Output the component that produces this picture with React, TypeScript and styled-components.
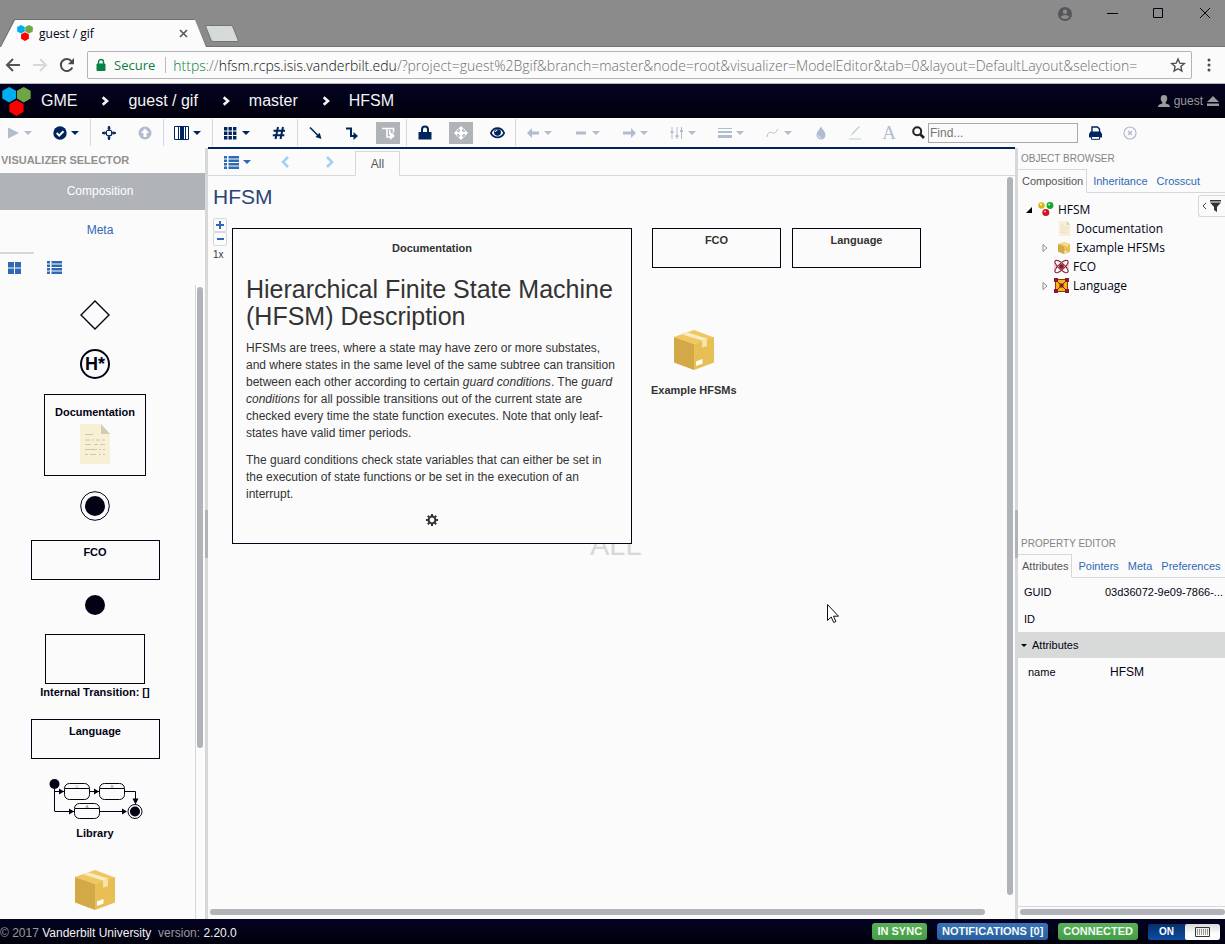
import React from "react";
import styled, { createGlobalStyle, css } from "styled-components";

const ink = "#00245c";
const faded = "#b2bccf";
const link = "#2f69b3";
const paper = "#fbfbfb";
const line = "#d6d9d9";
const thumb = "#b0b4b9";
const black = "#020214";
const sans = `"Liberation Sans", Arial, sans-serif`;
const chromeFont = `"Open Sans", "Noto Sans", sans-serif`;

const GlobalStyle = createGlobalStyle`
  *, *::before, *::after { box-sizing: border-box; }
  body { margin: 0; background: ${paper}; color: ${black}; font-family: ${sans}; font-size: 12px; }
  button { border: 0; padding: 0; background: none; color: inherit; font: inherit; cursor: pointer; }
  a { color: inherit; text-decoration: none; }
  svg { display: block; flex: none; overflow: visible; }
  h1, h2, p, ul { margin: 0; padding: 0; font-weight: normal; }
  ul { list-style: none; }
`;

const Page = styled.div`
  display: flex;
  flex-direction: column;
  height: 100vh;
  overflow: hidden;
`;

/* ---------- browser chrome ---------- */

const TabStrip = styled.div`
  display: flex;
  align-items: flex-end;
  height: 47px;
  flex: none;
  padding-right: 14px;
  background: #8b8b8b;
  border-bottom: 1px solid #727272;
`;

const Tab = styled.div`
  position: relative;
  width: 207px;
  height: 28px;
  margin-bottom: -1px;
  padding: 0 19px 0 17px;
  display: flex;
  align-items: center;
  gap: 6px;
  font-family: ${chromeFont};
  font-size: 12px;
  &::before, &::after {
    content: "";
    position: absolute;
    inset: 0;
    background: #6f6f6f;
    clip-path: polygon(0 100%, 14px 0, 194px 0, 100% 100%);
  }
  &::after {
    inset: 1px 1px 0;
    background: ${paper};
  }
  > * { position: relative; z-index: 1; }
`;

const TabTitle = styled.span`
  flex: 1;
`;

const NewTab = styled.button`
  width: 28px;
  height: 17px;
  margin: 0 auto 4px 1px;
  background: #d7dada;
  border: 1px solid #747474;
  border-radius: 2px;
  transform: skewX(22deg);
`;

const WindowButtons = styled.div`
  display: flex;
  gap: 35px;
  height: 47px;
  padding-top: 8px;
  align-items: flex-start;
`;

const AddressRow = styled.div`
  display: flex;
  align-items: center;
  height: 37px;
  flex: none;
  padding: 0 12px 0 6px;
  gap: 13px;
  border-bottom: 1px solid #b9b9bb;
`;

const AddressBox = styled.div`
  display: flex;
  align-items: center;
  flex: 1;
  min-width: 0;
  height: 28px;
  padding: 0 6px 0 8px;
  border: 1px solid #b3b3b8;
  border-radius: 2px;
  font-family: ${chromeFont};
  font-size: 14px;
  color: #6f6f6f;
  white-space: nowrap;
`;

const Secure = styled.span`
  padding: 0 10px 0 8px;
  margin-right: 7px;
  border-right: 1px solid #b9b9b9;
  line-height: 16px;
  font-size: 13px;
  color: #0b8043;
`;

const Url = styled.div`
  flex: 1;
  min-width: 0;
  outline: 0;
  overflow: hidden;
  font-weight: 300;
`;

const Scheme = styled.span` color: #0b8043; `;
const Host = styled.span` color: #111; `;

/* ---------- application header ---------- */

const NavBar = styled.nav`
  display: flex;
  align-items: center;
  height: 34px;
  flex: none;
  padding: 0 6px 0 2px;
  background: linear-gradient(#030322, #00000c);
  color: #f4f4f6;
  font-size: 16px;
`;

const Crumbs = styled.div`
  display: flex;
  align-items: center;
  flex: 1;
  padding-left: 10px;
  > svg { margin: 0 19px 0 24px; }
`;

const User = styled.button`
  display: flex;
  align-items: center;
  gap: 4px;
  font-size: 12px;
  color: #9a9a9c;
`;

const ToolBar = styled.div`
  display: flex;
  align-items: center;
  height: 30px;
  flex: none;
  padding-bottom: 1px;
`;

const ToolGroup = styled.div<{ $last?: boolean }>`
  display: flex;
  height: 27px;
  border-right: ${(p) => (p.$last ? "0" : `1px solid #d3d8e4`)};
`;

const Tool = styled.button<{ $off?: boolean; $menu?: boolean; $tight?: boolean; $narrow?: boolean }>`
  display: flex;
  align-items: center;
  justify-content: center;
  width: ${(p) => (p.$narrow ? 34 : 36)}px;
  color: ${(p) => (p.$off ? faded : ink)};
  ${(p) =>
    p.$menu &&
    css`
      width: ${p.$tight ? 45 : 48}px;
      padding-left: ${p.$tight ? 8 : 10}px;
      justify-content: flex-start;
      gap: 4px;
    `}
`;

const Pressed = styled.span`
  display: flex;
  align-items: center;
  justify-content: center;
  width: 24px;
  height: 22px;
  background: ${thumb};
  color: #fff;
`;

const Letter = styled.span`
  font-family: "Liberation Serif", serif;
  font-size: 19px;
`;

const SearchLabel = styled.label`
  display: flex;
  align-items: center;
  gap: 3px;
  padding-left: 6px;
`;

const SearchInput = styled.input`
  width: 150px;
  height: 20px;
  padding: 0 1px;
  border: 1px solid #a9a9b0;
  background: ${paper};
  font: 12px ${sans};
  color: ${black};
  &::placeholder { color: #757575; opacity: 1; }
`;

/* ---------- main area ---------- */

const Main = styled.main`
  display: grid;
  grid-template-columns: 205px 3px minmax(0, 1fr) 3px 207px;
  flex: 1;
  min-height: 0;
`;

const Splitter = styled.div`
  display: flex;
  align-items: center;
  background: ${line};
  &::before {
    content: "";
    width: 3px;
    height: 48px;
    background: ${thumb};
  }
`;

const Column = styled.div`
  display: flex;
  flex-direction: column;
  min-width: 0;
  min-height: 0;
`;

const BrowserColumn = styled(Column)`
  padding-top: 1px;
`;

const SelectorTitle = styled.h2`
  height: 25px;
  padding-left: 1px;
  line-height: 25px;
  font-size: 11px;
  font-weight: bold;
  color: #919191;
`;

const Visualizer = styled.button<{ $active?: boolean }>`
  height: ${(p) => (p.$active ? 37 : 42)}px;
  padding: 0 5px 2px 0;
  background: ${(p) => (p.$active ? thumb : "transparent")};
  color: ${(p) => (p.$active ? "#fff" : link)};
`;

const PaletteModes = styled.div`
  display: flex;
  align-items: center;
  height: 33px;
  color: ${link};
`;

const Mode = styled.button<{ $active?: boolean }>`
  display: flex;
  align-items: center;
  justify-content: center;
  height: 33px;
  width: ${(p) => (p.$active ? 34 : 40)}px;
  padding: 0 ${(p) => (p.$active ? 6 : 0)}px 4px 0;
  border-top: 2px solid ${(p) => (p.$active ? line : "transparent")};
`;

const PaletteBody = styled.div`
  display: flex;
  flex: 1;
  min-height: 0;
  overflow: hidden;
`;

const PaletteItems = styled.ul`
  display: flex;
  flex-direction: column;
  align-items: center;
  flex: 1;
  padding: 15px 5px 0 0;
  gap: 19px;
  font-size: 11px;
  font-weight: bold;
`;

const PaletteItem = styled.li<{ $pull?: number }>`
  display: flex;
  flex-direction: column;
  align-items: center;
  flex: none;
  gap: 1px;
  margin-bottom: ${(p) => -(p.$pull ?? 0)}px;
  line-height: 15px;
`;

const ShapeBox = styled.div<{ $w: number; $h: number; $pad: number }>`
  display: flex;
  flex-direction: column;
  align-items: center;
  width: ${(p) => p.$w}px;
  height: ${(p) => p.$h}px;
  padding-top: ${(p) => p.$pad}px;
  border: 1px solid ${black};
  line-height: 15px;
`;

const Spacer = styled.span`
  height: 4px;
`;

const Track = styled.div<{ $size: number }>`
  width: 10px;
  padding: 2px 0 0 1px;
  border-left: 1px solid ${line};
  &::before {
    content: "";
    display: block;
    width: 6px;
    height: ${(p) => p.$size}%;
    border-radius: 3px;
    background: ${thumb};
  }
`;

const EditorColumn = styled(Column)`
  border-top: 2px solid ${ink};
  margin-top: -1px;
`;

const EditorTabs = styled.div`
  display: flex;
  align-items: stretch;
  height: 27px;
  flex: none;
  border-bottom: 1px solid ${line};
  color: ${link};
`;

const EditorMenu = styled.button`
  display: flex;
  align-items: center;
  gap: 4px;
  width: 54px;
  padding-left: 16px;
`;

const Step = styled.button`
  display: flex;
  align-items: center;
  justify-content: center;
  width: 45px;
  color: #a5d0f3;
`;

const EditorTab = styled.button`
  width: 45px;
  height: 25px;
  margin: 2px 0 -1px 3px;
  border: 1px solid ${line};
  border-bottom-color: ${paper};
  background: ${paper};
  color: #555;
`;

const EditorTitle = styled.h1`
  height: 42px;
  flex: none;
  padding-left: 5px;
  line-height: 42px;
  font-size: 21px;
  color: #2b4575;
`;

const EditorSurface = styled.div`
  display: grid;
  grid-template-columns: minmax(0, 1fr) 8px;
  flex: 1;
  min-height: 0;
`;

const Canvas = styled.div`
  position: relative;
  flex: 1;
  color: #333;
  font-size: 11px;
`;

const VerticalThumb = styled.div`
  width: 6px;
  height: 98%;
  margin-top: 1px;
  border-radius: 3px;
  background: ${thumb};
`;

const HorizontalThumb = styled.div<{ $size: number }>`
  width: ${(p) => p.$size}%;
  height: 6px;
  flex: none;
  margin: 0 0 4px 2px;
  border-radius: 3px;
  background: ${thumb};
`;

const ZoomControl = styled.div`
  position: absolute;
  left: 5px;
  top: 0;
  width: 14px;
  color: ${link};
`;

const ZoomButton = styled.button`
  display: flex;
  align-items: center;
  justify-content: center;
  width: 14px;
  height: 14px;
  border: 1px solid ${line};
  border-radius: 2px;
`;

const ZoomLevel = styled.span`
  display: block;
  padding-top: 3px;
  line-height: 12px;
  font-size: 10px;
  color: #333;
`;

const Watermark = styled.span`
  position: absolute;
  left: 382px;
  top: 311px;
  font-size: 29px;
  line-height: 32px;
  color: #d6d9d9;
`;

const Node = styled.div<{ $x: number; $y: number }>`
  position: absolute;
  left: ${(p) => p.$x}px;
  top: ${(p) => p.$y}px;
  display: flex;
  flex-direction: column;
  align-items: center;
  font-weight: bold;
`;

const NodeName = styled.span`
  padding-top: 13px;
  line-height: 15px;
`;

const DocNode = styled.article`
  position: absolute;
  left: 24px;
  top: 10px;
  width: 400px;
  height: 316px;
  padding: 12px 13px;
  border: 1px solid ${black};
  background: ${paper};
  font-size: 12px;
  line-height: 17px;
  > h2 { font-size: 25px; line-height: 27px; margin: 20px 0 10px; }
  > p { margin-bottom: 10px; }
`;

const DocName = styled.div`
  font-size: 11px;
  line-height: 15px;
  font-weight: bold;
  text-align: center;
`;

const DocSettings = styled.button`
  display: block;
  margin: 11px auto 0;
`;

const Pointer = styled.svg`
  position: absolute;
  left: 619px;
  top: 386px;
`;

/* ---------- right column ---------- */

const Panel = styled.section`
  display: flex;
  flex-direction: column;
  flex: 1;
  min-height: 0;
`;

const PanelTitle = styled.h2`
  height: 20px;
  padding-left: 3px;
  line-height: 20px;
  font-size: 10px;
  color: #848484;
`;

const PanelTabs = styled.div`
  display: flex;
  height: 24px;
  font-size: 11px;
  border-bottom: 1px solid ${line};
  color: ${link};
`;

const PanelTab = styled.button<{ $active?: boolean }>`
  padding: 0 5px 0 4px;
  margin: 0 0 -1px;
  white-space: nowrap;
  ${(p) =>
    p.$active &&
    css`
      padding-right: 3px;
      color: #555;
      border: 1px solid ${line};
      border-left: 0;
      border-bottom-color: ${paper};
      margin-right: 2px;
    `}
`;

const TreeArea = styled.div`
  display: flex;
  align-items: flex-start;
  justify-content: space-between;
`;

const Tree = styled.ul`
  padding: 7px 0 0 8px;
  font-family: ${chromeFont};
  font-size: 12px;
  line-height: 19px;
  white-space: nowrap;
`;

const Branch = styled.li<{ $depth: number }>`
  display: flex;
  align-items: center;
  height: 19px;
  padding-left: ${(p) => p.$depth * 16}px;
  gap: 4px;
`;

const Twisty = styled.span`
  display: flex;
  width: 8px;
  flex: none;
`;

const WideIcon = styled.span`
  display: flex;
  justify-content: center;
  width: 18px;
  padding-left: 2px;
`;

const FilterButton = styled.button`
  display: flex;
  align-items: center;
  gap: 3px;
  width: 27px;
  height: 22px;
  flex: none;
  margin-top: 2px;
  padding-left: 3px;
  border: 1px solid ${line};
  border-right: 0;
  border-radius: 3px 0 0 3px;
`;

const Properties = styled.table`
  width: 100%;
  border-collapse: collapse;
  table-layout: fixed;
  font-size: 11px;
  th, td {
    height: 27px;
    padding: 0 0 0 6px;
    text-align: left;
    font-weight: normal;
    white-space: nowrap;
    overflow: hidden;
    text-overflow: ellipsis;
  }
  th { width: 81px; }
`;

const SectionRow = styled.tr`
  background: #d8dad9;
  th { height: 26px; padding-left: 3px; }
`;

const NestedRow = styled.tr`
  th { padding-left: 10px; }
  td { padding-left: 11px; font-size: 12px; }
`;

const SectionToggle = styled.button`
  display: flex;
  align-items: center;
  gap: 5px;
`;

const PanelScroll = styled.div`
  margin-top: auto;
  padding-top: 2px;
  border-top: 1px solid ${line};
`;

/* ---------- status bar ---------- */

const Footer = styled.footer`
  display: flex;
  align-items: center;
  height: 25px;
  flex: none;
  padding-right: 5px;
  gap: 10px;
  background: linear-gradient(#030322, #00000c);
  color: #9a9a9a;
  a { color: #f2f2f2; }
`;

const Credits = styled.span`
  flex: 1;
  padding-top: 2px;
`;

const Badge = styled.button<{ $tone: "ok" | "info" }>`
  height: 17px;
  padding: 0 5px;
  border-radius: 3px;
  font-size: 11px;
  font-weight: bold;
  line-height: 17px;
  color: #f4faf4;
  background: ${(p) =>
    p.$tone === "ok" ? "linear-gradient(#58b058, #459d45)" : "linear-gradient(#3873b8, #285f9f)"};
`;

const Switch = styled.button`
  display: flex;
  width: 72px;
  height: 16px;
  border-radius: 2px;
  overflow: hidden;
  background: linear-gradient(#06316b, #0d4da0);
  font-size: 10px;
  font-weight: bold;
  line-height: 16px;
  color: #fff;
`;

const SwitchText = styled.span` width: 37px; `;

const SwitchKnob = styled.span`
  display: flex;
  align-items: center;
  justify-content: center;
  flex: 1;
  height: 16px;
  border-radius: 2px;
  background: linear-gradient(#d9d9d9, #fdfdfd 60%);
`;

/* ---------- drawings ---------- */

type IconProps = { w?: number; h?: number; children: React.ReactNode };
const Icon = ({ w = 14, h = 14, children }: IconProps) => (
  <svg width={w} height={h} viewBox={`0 0 ${w} ${h}`} fill="currentColor" aria-hidden="true">
    {children}
  </svg>
);

const Caret = () => (
  <Icon w={8} h={4}><path d="M0 0h8L4 4z" /></Icon>
);

const HexLogo = ({ size }: { size: number }) => (
  <svg width={size} height={size} viewBox="0 0 28 28" aria-hidden="true">
    <path d="M7 0l6.6 3.6v7.6L7 15 .3 11.200V3.600z" fill="#00adef" />
    <path d="M21 0l6.700 3.600v7.600L21 15l-6.600-3.800V3.600z" fill="#6ea644" />
    <path d="M14 12.500l6.800 3.800v7.700L14 28l-6.900-4v-7.700z" fill="#fe0000" />
  </svg>
);

const ListGlyph = () => (
  <Icon w={15} h={13}>
    <path d="M0 0h3v2.500H0zM4.500 0H15v2.500H4.500zM0 3.500h3V6H0zM4.500 3.500H15V6H4.500zM0 7h3v2.500H0zM4.500 7H15v2.500H4.500zM0 10.500h3V13H0zM4.500 10.500H15V13H4.500z" />
  </Icon>
);

const CrumbArrow = () => (
  <Icon w={8} h={10}><path d="M1.700 1.200L6 5 1.700 8.800" fill="none" stroke="currentColor" strokeWidth="2.600" /></Icon>
);

const Carton = ({ size }: { size: number }) => (
  <svg width={size} height={size} viewBox="0 0 40 40" aria-hidden="true">
    <path d="M20 0l20 7.500L20 14 0 7z" fill="#efc75e" />
    <path d="M0 7l20 7v26L0 32.500z" fill="#d3a847" />
    <path d="M40 7l-20 7v26l20-7.500z" fill="#e7bf55" />
    <path d="M8.500 4.500l5-2L33 8.500l-5 2z" fill="#f9ecc4" />
    <path d="M28 10.500l5-2V16l-5 1.700z" fill="#f7e3a6" />
    <path d="M22 31.500l6.500-2.500v4.500L22 36z" fill="#fff" />
  </svg>
);

const Sheet = ({ w, h }: { w: number; h: number }) => (
  <svg width={w} height={h} viewBox="0 0 30 40" aria-hidden="true">
    <path d="M0 0h21l9 10v30H0z" fill="#f7f0d4" />
    <path d="M21 0l9 10h-9z" fill="#d3ccb0" />
    <path d="M5 10.500h8M5 16h5m2 0h2m2 0h4m2 0h3M5 20.500h6m3 0h4m2 0h5M5 25.500h12m2 0h2m2 0h2M5 30.500h3m2 0h6m3 0h2m2 0h2" stroke="#cdc6b2" strokeWidth="1.200" fill="none" />
  </svg>
);

const LibraryDrawing = () => (
  <svg width="92" height="42" viewBox="0 0 92 42" fill="none" stroke={black} aria-hidden="true">
    <path d="M5.500 5v28M5.500 13.500H15M46 13.500h4M82 13.500h4.500V22M5.500 33.500H25M57 33.500h18" />
    <path d="M10 10.500l5 3-5 3zM45 10.500l5 3-5 3zM20 30.500l5 3-5 3zM73 30.500l5 3-5 3zM83.500 20.500h6l-3 6z" fill={black} stroke="none" />
    <rect x="15.500" y="5.500" width="25" height="16" rx="5" />
    <rect x="50.500" y="5.500" width="25" height="16" rx="5" />
    <rect x="25.500" y="25.500" width="25" height="15" rx="5" />
    <path d="M16 10.500h24M51 10.500h24M26 30.500h24M41 13.500h5M76 13.500h6M51 33.500h6" />
    <circle cx="5.500" cy="6" r="5" fill={black} stroke="none" />
    <circle cx="86" cy="33.500" r="7" />
    <circle cx="86" cy="33.500" r="5" fill={black} stroke="none" />
    <g fill="#777" stroke="none" fontSize="4" fontWeight="normal" textAnchor="middle">
      <text x="28" y="10">C</text>
      <text x="63" y="10">B</text>
      <text x="38" y="30">A</text>
    </g>
  </svg>
);

const ModelGlyph = () => (
  <svg width="16" height="15" viewBox="0 0 16 15" aria-hidden="true">
    <circle cx="3.500" cy="3.500" r="3.200" fill="#d8b516" /><circle cx="2.800" cy="2.600" r="1" fill="#fff6b8" />
    <circle cx="12" cy="3.500" r="3.400" fill="#14a82a" /><circle cx="11.200" cy="2.600" r="1" fill="#b5ffb9" />
    <circle cx="7.800" cy="10.500" r="3.500" fill="#cf1120" /><circle cx="7" cy="9.500" r="1" fill="#ffb7b7" />
  </svg>
);

const AtomGlyph = () => (
  <svg width="15" height="15" viewBox="0 0 15 15" fill="none" stroke="#8c1a2e" aria-hidden="true">
    <ellipse cx="7.500" cy="7.500" rx="8.500" ry="3" transform="rotate(42 7.500 7.500)" />
    <ellipse cx="7.500" cy="7.500" rx="8.500" ry="3" transform="rotate(-42 7.500 7.500)" />
    <circle cx="7.500" cy="7.500" r="2" fill="#8c1a2e" />
    <path d="M1 5v5M14 5v5" stroke="#d9a9b1" />
  </svg>
);

const LanguageGlyph = () => (
  <svg width="15" height="15" viewBox="0 0 15 15" aria-hidden="true">
    <path d="M1.500 1.500h12v12h-12z" fill="#f4b613" stroke="#8a3b10" />
    <path d="M2 2l11 11M13 2L2 13" stroke="#8c1a2e" />
    <path d="M0 0h4v4H0zM11 0h4v4h-4zM0 11h4v4H0zM11 11h4v4h-4zM5.500 5.500h4v4h-4z" fill="#8c1a2e" />
  </svg>
);

const Closed = () => (
  <Icon w={6} h={8}><path d="M1 .5L5 4 1 7.500z" fill="#fff" stroke="#8a8a8a" /></Icon>
);

const menuTools: { label: string; art: React.ReactNode }[] = [
  { label: "Start marker", art: <Icon><path d="M1 7l5-5v3.500h7v3H6V12z" /></Icon> },
  { label: "Line pattern", art: <Icon><path d="M2 5.500h10v3H2z" /></Icon> },
  { label: "End marker", art: <Icon><path d="M14 7L9 2v3.500H1v3h8V12z" /></Icon> },
  { label: "Label placement", art: <Icon><path d="M1.500 1h1v12h-1zM6.500 1h1v12h-1zM11 1h1v12h-1zM.5 5h3v2h-3zM5.500 9h3v2h-3zM10 4h3v2h-3z" /></Icon> },
  { label: "Line width", art: <Icon><path d="M0 2h14v1H0zM0 5h14v2H0zM0 9h14v3H0z" /></Icon> },
  { label: "Line shape", art: <Icon><path d="M1 11c1-6 4-5 6-4s3-1 5-4" fill="none" stroke="currentColor" /></Icon> },
];

export default function App() {
  return (
    <Page>
      <GlobalStyle />
      <TabStrip>
        <Tab>
          <HexLogo size={16} />
          <TabTitle>guest / gif</TabTitle>
          <button aria-label="Close tab">
            <Icon w={9} h={9}><path d="M1 1l7 7M8 1L1 8" stroke="#555" strokeWidth="1.600" /></Icon>
          </button>
        </Tab>
        <NewTab aria-label="New tab" />
        <WindowButtons>
          <button aria-label="Profile">
            <Icon><circle cx="7" cy="7" r="7" fill="#55555a" /><circle cx="7" cy="4.700" r="2.200" fill="#8b8b8b" /><path d="M2.700 10c1-2.700 7.600-2.700 8.600 0-2 2.800-6.600 2.800-8.600 0z" fill="#8b8b8b" /></Icon>
          </button>
          <button aria-label="Minimize"><Icon w={11}><path d="M0 6h11v1H0z" /></Icon></button>
          <button aria-label="Maximize"><Icon w={11}><path d="M.5 1.500h9v9h-9z" fill="none" stroke="currentColor" /></Icon></button>
          <button aria-label="Close window"><Icon w={12}><path d="M1 1l10 10M11 1L1 11" stroke="currentColor" fill="none" /></Icon></button>
        </WindowButtons>
      </TabStrip>

      <AddressRow>
        <button aria-label="Back"><Icon><path d="M14 7H1.500M7 1L1 7l6 6" fill="none" stroke="#555" strokeWidth="2" /></Icon></button>
        <button aria-label="Forward"><Icon><path d="M0 7h12.500M7 1l6 6-6 6" fill="none" stroke="#d8d8d8" strokeWidth="2" /></Icon></button>
        <button aria-label="Reload">
          <Icon><path d="M12.300 9.500a6 6 0 1 1-.8-6.300" fill="none" stroke="#4c4c4c" strokeWidth="2" /><path d="M14 0v6.200H7.800z" fill="#4c4c4c" /></Icon>
        </button>
        <AddressBox>
          <Icon w={10} h={12}><path d="M1 5h8v6.500H1z" fill="#0b8043" stroke="#0b8043" /><path d="M2.500 5V3a2.500 2.500 0 0 1 5 0v2" fill="none" stroke="#0b8043" strokeWidth="1.400" /></Icon>
          <Secure>Secure</Secure>
          <Url role="textbox" aria-label="Address" tabIndex={0}>
            <Scheme>https</Scheme>://<Host>hfsm.rcps.isis.vanderbilt.edu</Host>
            /?project=guest%2Bgif&amp;branch=master&amp;node=root&amp;visualizer=ModelEditor&amp;tab=0&amp;layout=DefaultLayout&amp;selection=
          </Url>
          <button aria-label="Bookmark">
            <Icon><path d="M7 1l1.800 4.200 4.500.4-3.400 3 1 4.400L7 10.700 3.100 13l1-4.400-3.400-3 4.500-.4z" fill="none" stroke="#4c4c4c" strokeWidth="1.400" /></Icon>
          </button>
        </AddressBox>
        <button aria-label="Browser menu">
          <Icon w={8}><circle cx="4" cy="2" r="1.500" fill="#4c4c4c" /><circle cx="4" cy="7" r="1.500" fill="#4c4c4c" /><circle cx="4" cy="12" r="1.500" fill="#4c4c4c" /></Icon>
        </button>
      </AddressRow>

      <NavBar>
        <HexLogo size={29} />
        <Crumbs>
          <a href="#gme">GME</a><CrumbArrow />
          <a href="#project">guest / gif</a><CrumbArrow />
          <a href="#branch">master</a><CrumbArrow />
          <a href="#node">HFSM</a>
        </Crumbs>
        <User>
          <Icon w={12} h={12}><path d="M6 0c4 0 4 5 1.700 7.200v1.300c2 .7 4.300 1 4.300 3.500H0c0-2.500 2.300-2.800 4.300-3.500V7.200C2 5 2 0 6 0z" /></Icon>
          guest
          <Icon w={12} h={10}><path d="M6 0l6 6H0zM0 7.500h12V10H0z" /></Icon>
        </User>
      </NavBar>

      <ToolBar role="toolbar">
        <ToolGroup>
          <Tool $menu $tight $off aria-label="Run plugin"><Icon w={12}><path d="M0 1.500L11 7 0 12.500z" /></Icon><Caret /></Tool>
          <Tool $menu $tight aria-label="Check">
            <Icon><circle cx="7" cy="7" r="6.700" /><path d="M3.700 7l2.500 2.500 4.300-4.300" fill="none" stroke="#fff" strokeWidth="2" /></Icon><Caret />
          </Tool>
        </ToolGroup>
        <ToolGroup>
          <Tool aria-label="Locate">
            <Icon><path d="M7 0v5M7 9v5M0 7h5M9 7h5" stroke="currentColor" strokeWidth="1.600" /><path d="M5 2.500h4L7 0zM5 11.500h4L7 14zM2.500 5v4L0 7zM11.500 5v4L14 7z" /><circle cx="7" cy="7" r="3" fill="none" stroke="currentColor" strokeWidth="1.200" /></Icon>
          </Tool>
          <Tool $off aria-label="Go to parent">
            <Icon><circle cx="7" cy="7" r="6.500" /><path d="M7 2.500l4 4.500H8.500v4h-3V7H3z" fill="#fff" /></Icon>
          </Tool>
        </ToolGroup>
        <ToolGroup>
          <Tool $menu aria-label="Layout">
            <Icon w={15}><path d="M.5.5h14v13H.5z" fill="#fff" stroke="currentColor" /><path d="M4 1h1v12H4zM6 1h4v12H6zM11 1h1v12h-1z" /></Icon><Caret />
          </Tool>
        </ToolGroup>
        <ToolGroup>
          <Tool $menu aria-label="Grid">
            <Icon w={15}><path d="M1 1h3.400v3.400H1zM5.500 1h3.400v3.400H5.500zM10 1h3.400v3.400H10zM1 5.500h3.400v3.400H1zM5.500 5.500h3.400v3.400H5.500zM10 5.500h3.400v3.400H10zM1 10h3.400v3.400H1zM5.500 10h3.400v3.400H5.500zM10 10h3.400v3.400H10z" /></Icon><Caret />
          </Tool>
          <Tool aria-label="Show grid numbers">
            <Icon><path d="M6 1L3.500 13M11 1L8.500 13M1.500 4.800H13M.8 9.200h11.500" fill="none" stroke="currentColor" strokeWidth="2" /></Icon>
          </Tool>
        </ToolGroup>
        <ToolGroup>
          <Tool aria-label="Straight connections"><Icon><path d="M1 1.500l9 9" stroke="currentColor" strokeWidth="1.600" /><path d="M12.500 13L6.500 11l4.200-4.300z" /></Icon></Tool>
          <Tool aria-label="Routed connections"><Icon><path d="M1 2.500h5V10h3" fill="none" stroke="currentColor" strokeWidth="2" /><path d="M8.500 6v8l4.500-4z" /></Icon></Tool>
          <Tool aria-label="Smart routing" aria-pressed="true">
            <Pressed><Icon w={15}><path d="M1 2.500h11.500v4M6 3v8h4M8.800 4v4h3.500" fill="none" stroke="currentColor" strokeWidth="1.600" /><path d="M9 6v8l5-4z" /></Icon></Pressed>
          </Tool>
        </ToolGroup>
        <ToolGroup>
          <Tool aria-label="Lock"><Icon><path d="M.5 6h13v7.500H.5z" /><path d="M4 6.500V3.500a3 3 0 0 1 6 0v3" fill="none" stroke="currentColor" strokeWidth="2" /></Icon></Tool>
          <Tool aria-label="Move" aria-pressed="true">
            <Pressed><Icon><path d="M7 0l3.200 3.200H8v2.800h2.800V3.800L14 7l-3.200 3.200V8H8v2.800h2.200L7 14l-3.200-3.200H6V8H3.200v2.200L0 7l3.200-3.200V6H6V3.200H3.800z" /><path d="M3 3l8 8M11 3l-8 8" stroke="currentColor" strokeDasharray="2 1.500" /></Icon></Pressed>
          </Tool>
          <Tool aria-label="Preview">
            <Icon w={15}><path d="M.8 7c3-6.500 10.400-6.500 13.400 0-3 5.800-10.400 5.800-13.400 0z" fill="none" stroke="currentColor" strokeWidth="1.700" /><circle cx="7.500" cy="6.300" r="3.400" /><path d="M5.500 6a2 2 0 0 1 2-2" fill="none" stroke="#fff" /></Icon>
          </Tool>
        </ToolGroup>
        <ToolGroup $last>
          {menuTools.map((t) => (
            <Tool key={t.label} $menu $off aria-label={t.label}>{t.art}<Caret /></Tool>
          ))}
        </ToolGroup>
        <ToolGroup $last>
          <Tool $off $narrow aria-label="Fill color"><Icon><path d="M7 0c1 3.500 4.500 5.500 4.500 9a4.500 4.500 0 0 1-9 0C2.500 5.500 6 3.500 7 0z" /><path d="M4.500 9.500c.2 1.500 1 2 2 2.300" fill="none" stroke="#fff" /></Icon></Tool>
          <Tool $off $narrow aria-label="Border color"><Icon><path d="M1 12.500h12v1H1zM3 10l1-3 7-7 1 1-7 7z" fill="#b9d3d0" /></Icon></Tool>
          <Tool $off $narrow aria-label="Text color"><Letter>A</Letter></Tool>
        </ToolGroup>
        <SearchLabel>
          <Icon w={13} h={13}><circle cx="5.200" cy="5.200" r="4" fill="none" stroke="#222" strokeWidth="2" /><path d="M8 8l4 4" stroke="#222" strokeWidth="2.600" /></Icon>
          <SearchInput placeholder="Find..." aria-label="Find" />
        </SearchLabel>
        <Tool $narrow aria-label="Print">
          <Icon w={13}><path d="M3 6V1h5.500L10.500 3v3" fill="none" stroke="currentColor" strokeWidth="1.400" /><path d="M0 8l1.500-2.500h10L13 8v3.500H0z" /><path d="M2.500 10.500h8v2.800h-8z" fill="#fff" stroke="currentColor" /></Icon>
        </Tool>
        <Tool $off aria-label="Cancel">
          <Icon><circle cx="7" cy="7" r="6" fill="none" stroke="currentColor" strokeWidth="1.200" /><path d="M5 5l4 4M9 5L5 9" stroke="currentColor" strokeWidth="1.400" /></Icon>
        </Tool>
      </ToolBar>

      <Main>
        <Column>
          <SelectorTitle>VISUALIZER SELECTOR</SelectorTitle>
          <Visualizer $active>Composition</Visualizer>
          <Visualizer>Meta</Visualizer>
          <PaletteModes>
            <Mode $active aria-label="Icon view"><Icon w={13} h={12}><path d="M0 0h6v5.500H0zM7 0h6v5.500H7zM0 6.500h6V12H0zM7 6.500h6V12H7z" /></Icon></Mode>
            <Mode aria-label="List view"><ListGlyph /></Mode>
          </PaletteModes>
          <PaletteBody>
            <PaletteItems>
              <PaletteItem><Icon w={30} h={30}><path d="M15 1l14 14-14 14L1 15z" fill="none" stroke="currentColor" strokeWidth="1.400" /></Icon></PaletteItem>
              <PaletteItem $pull={4}>
                <svg width="30" height="30" viewBox="0 0 30 30" role="img" aria-label="Deep history">
                  <circle cx="15" cy="15" r="14" fill="none" stroke={black} strokeWidth="2" />
                  <text x="15" y="21" textAnchor="middle" fontSize="18" fontFamily="Liberation Sans" fill={black}>H*</text>
                </svg>
              </PaletteItem>
              <PaletteItem $pull={4}>
                <ShapeBox $w={102} $h={82} $pad={10}>Documentation<Spacer /><Sheet w={30} h={40} /></ShapeBox>
              </PaletteItem>
              <PaletteItem><Icon w={30} h={30}><circle cx="15" cy="15" r="14.300" fill="none" stroke="currentColor" /><circle cx="15" cy="15" r="10" /></Icon></PaletteItem>
              <PaletteItem $pull={4}><ShapeBox $w={129} $h={40} $pad={4}>FCO</ShapeBox></PaletteItem>
              <PaletteItem><Icon w={20} h={20}><circle cx="10" cy="10" r="10" /></Icon></PaletteItem>
              <PaletteItem><ShapeBox $w={100} $h={50} $pad={0} />Internal Transition: []</PaletteItem>
              <PaletteItem><ShapeBox $w={129} $h={40} $pad={4}>Language</ShapeBox></PaletteItem>
              <PaletteItem><LibraryDrawing /><Spacer />Library</PaletteItem>
              <PaletteItem><Spacer /><Spacer /><Carton size={40} /></PaletteItem>
            </PaletteItems>
            <Track $size={73} />
          </PaletteBody>
        </Column>
        <Splitter />
        <EditorColumn>
          <EditorTabs>
            <EditorMenu aria-label="Select aspect"><ListGlyph /><Caret /></EditorMenu>
            <Step aria-label="Previous"><Icon w={8} h={12}><path d="M7 1L2 6l5 5" fill="none" stroke="currentColor" strokeWidth="2.600" /></Icon></Step>
            <Step aria-label="Next"><Icon w={8} h={12}><path d="M1 1l5 5-5 5" fill="none" stroke="currentColor" strokeWidth="2.600" /></Icon></Step>
            <EditorTab>All</EditorTab>
          </EditorTabs>
          <EditorSurface>
            <Column>
              <EditorTitle>HFSM</EditorTitle>
              <Canvas>
                <Watermark>ALL</Watermark>
                <ZoomControl>
                  <ZoomButton aria-label="Zoom in"><Icon w={8} h={8}><path d="M4 0v8M0 4h8" stroke="currentColor" strokeWidth="2" /></Icon></ZoomButton>
                  <ZoomButton aria-label="Zoom out"><Icon w={8} h={8}><path d="M1 4h7" stroke="currentColor" strokeWidth="2" /></Icon></ZoomButton>
                  <ZoomLevel>1x</ZoomLevel>
                </ZoomControl>
                <DocNode>
                  <DocName>Documentation</DocName>
                  <h2>Hierarchical Finite State Machine (HFSM) Description</h2>
                  <p>
                    HFSMs are trees, where a state may have zero or more substates, and where states in the same level of the
                    same subtree can transition between each other according to certain <em>guard conditions</em>. The{" "}
                    <em>guard conditions</em> for all possible transitions out of the current state are checked every time the
                    state function executes. Note that only leaf-states have valid timer periods.
                  </p>
                  <p>
                    The guard conditions check state variables that can either be set in the execution of state functions or be
                    set in the execution of an interrupt.
                  </p>
                  <DocSettings aria-label="Settings">
                    <Icon w={12} h={12}><circle cx="6" cy="6" r="3.400" fill="none" stroke="#333" strokeWidth="2" /><path d="M6 0v2M6 10v2M0 6h2M10 6h2M1.800 1.800l1.400 1.400M8.800 8.800l1.400 1.400M10.200 1.800L8.800 3.200M3.200 8.800l-1.400 1.400" stroke="#333" strokeWidth="2" /></Icon>
                  </DocSettings>
                </DocNode>
                <Node $x={444} $y={10}><ShapeBox $w={129} $h={40} $pad={4}>FCO</ShapeBox></Node>
                <Node $x={584} $y={10}><ShapeBox $w={129} $h={40} $pad={4}>Language</ShapeBox></Node>
                <Node $x={443} $y={112}><Carton size={40} /><NodeName>Example HFSMs</NodeName></Node>
                <Pointer width="12" height="19" viewBox="0 0 12 19" aria-hidden="true">
                  <path d="M.5.500v16l3.700-3.500 2.500 5.500 2.200-1-2.400-5.300h5z" fill="#fff" stroke="#111" />
                </Pointer>
              </Canvas>
            </Column>
            <VerticalThumb />
          </EditorSurface>
          <HorizontalThumb $size={96} />
        </EditorColumn>
        <Splitter />
        <BrowserColumn>
          <Panel>
            <PanelTitle>OBJECT BROWSER</PanelTitle>
            <PanelTabs>
              <PanelTab $active>Composition</PanelTab>
              <PanelTab>Inheritance</PanelTab>
              <PanelTab>Crosscut</PanelTab>
            </PanelTabs>
            <TreeArea>
              <Tree>
                <Branch $depth={0}><Twisty><Icon w={6} h={6}><path d="M6 0v6H0z" /></Icon></Twisty><ModelGlyph />HFSM</Branch>
                <Branch $depth={1}><Twisty /><WideIcon><Sheet w={13} h={15} /></WideIcon>Documentation</Branch>
                <Branch $depth={1}><Twisty><Closed /></Twisty><WideIcon><Carton size={12} /></WideIcon>Example HFSMs</Branch>
                <Branch $depth={1}><Twisty /><AtomGlyph />FCO</Branch>
                <Branch $depth={1}><Twisty><Closed /></Twisty><LanguageGlyph />Language</Branch>
              </Tree>
              <FilterButton aria-label="Filter">
                <Icon w={5} h={8}><path d="M4 1L1 4l3 3" fill="none" stroke="#444" /></Icon>
                <Icon w={11} h={12}><path d="M0 0h11v1.500H0zM0 2.500h11L7 7v5l-3-2V7z" fill="#333" /></Icon>
              </FilterButton>
            </TreeArea>
          </Panel>
          <Panel>
            <PanelTitle>PROPERTY EDITOR</PanelTitle>
            <PanelTabs>
              <PanelTab $active>Attributes</PanelTab>
              <PanelTab>Pointers</PanelTab>
              <PanelTab>Meta</PanelTab>
              <PanelTab>Preferences</PanelTab>
            </PanelTabs>
            <Properties>
              <tbody>
                <tr><th scope="row">GUID</th><td>03d36072-9e09-7866-...</td></tr>
                <tr><th scope="row">ID</th><td /></tr>
                <SectionRow>
                  <th scope="colgroup" colSpan={2}><SectionToggle><Icon w={6} h={3}><path d="M0 0h6L3 3z" /></Icon>Attributes</SectionToggle></th>
                </SectionRow>
                <NestedRow><th scope="row">name</th><td>HFSM</td></NestedRow>
              </tbody>
            </Properties>
            <PanelScroll><HorizontalThumb $size={99} /></PanelScroll>
          </Panel>
        </BrowserColumn>
      </Main>

      <Footer>
        <Credits>© 2017 <a href="#vu">Vanderbilt University</a>&nbsp; version: <a href="#version">2.20.0</a></Credits>
        <Badge $tone="ok">IN SYNC</Badge>
        <Badge $tone="info">NOTIFICATIONS [0]</Badge>
        <Badge $tone="ok">CONNECTED</Badge>
        <Switch role="switch" aria-checked="true" aria-label="Keyboard shortcuts">
          <SwitchText>ON</SwitchText>
          <SwitchKnob>
            <Icon w={15} h={10}><path d="M.5.500h14v9H.5z" fill="none" stroke="#333" /><path d="M2 3h11M2 5h11M2 7h11" stroke="#333" strokeDasharray="1 1" /></Icon>
          </SwitchKnob>
        </Switch>
      </Footer>
    </Page>
  );
}
